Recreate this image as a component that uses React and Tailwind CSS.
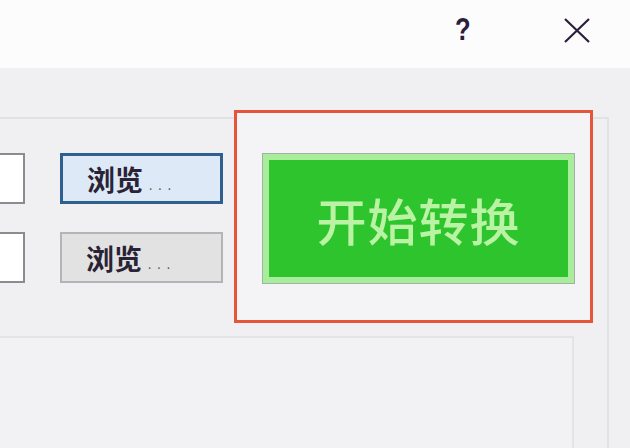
import { useState } from 'react';

const cjk = { fontFamily: '"Noto Sans CJK SC", "Noto Sans", sans-serif' };

// one file row: the path box (cut off by the window edge) and its browse button
const FileRow = ({ active }) => (
  <div className="flex items-center">
    <div className="w-[25px] h-[51px] bg-white border-y-2 border-r-2 border-[#8c8c90]" />
    <button
      className={
        'ml-[35px] w-[163px] h-[51px] flex items-center pl-[24px] text-[#2a2335] ' +
        (active
          ? 'bg-[#dde9f7] border-[3px] border-[#2e5f8f]'
          : 'bg-[#e2e2e3] border-2 border-[#b4b4b6]')
      }
      style={cjk}
    >
      <span className="text-[28px] leading-none font-bold">浏览</span>
      <span className="ml-[6px] mt-[12px] text-[12px] tracking-[6px] text-[#555]">...</span>
    </button>
  </div>
);

export default function App() {
  const [busy, setBusy] = useState(false);

  return (
    <div className="w-[630px] h-[448px] overflow-hidden bg-[#f0f0f2] flex flex-col">
      {/* title bar */}
      <div className="h-[68px] bg-[#fcfcfd] flex items-start justify-end shrink-0">
        <span
          className="mt-[13px] mr-[91px] text-[32px] font-bold leading-none text-[#2b1f3d] scale-x-[0.8]"
          style={{ fontFamily: '"Liberation Sans", sans-serif' }}
        >
          ?
        </span>
        <svg className="mt-[18px] mr-[40px]" width="26" height="25" viewBox="0 0 26 25">
          <path d="M1 1 L25 24 M25 1 L1 24" stroke="#2b1f3d" strokeWidth="2.2" />
        </svg>
      </div>

      {/* group box */}
      <div className="mt-[49px] w-[609px] flex-1 border-t-2 border-r-2 border-[#e2e2e5] flex flex-col">
        <div className="flex items-start">
          <div className="mt-[34px] flex flex-col gap-[28px]">
            <FileRow active />
            <FileRow />
          </div>

          <div className="ml-[11px] -mt-[9px] w-[359px] h-[213px] border-[3px] border-[#e4553a] bg-[#f4f4f6] flex items-start">
            <button
              onClick={() => setBusy(!busy)}
              className="ml-[25px] mt-[40px] w-[313px] h-[131px] border border-[#9fb2a6] bg-[#a8ec9c] p-[6px]"
            >
              <div
                className="w-full h-full bg-[#2ec42e] flex items-center justify-center text-[50px] leading-none font-medium text-[#b9f3a3] tracking-[1px]"
                style={cjk}
              >
                {busy ? '正在转换' : '开始转换'}
              </div>
            </button>
          </div>
        </div>

        {/* log panel */}
        <div className="mt-[13px] w-[574px] flex-1 border-t-2 border-r-2 border-[#e4e4e7] bg-[#f2f2f4]" />
      </div>
    </div>
  );
}
